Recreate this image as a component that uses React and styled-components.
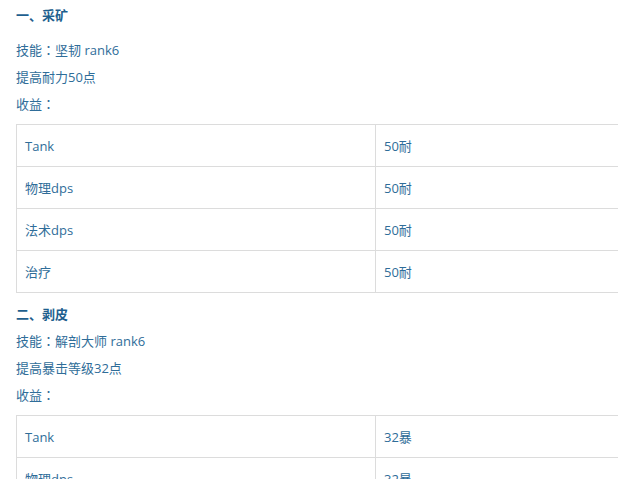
import React from "react";
import styled, { createGlobalStyle } from "styled-components";

const Global = createGlobalStyle`
  body {
    margin: 0;
    background: #fff;
    font-family: "Segoe UI", "Open Sans", "Noto Sans CJK SC", sans-serif;
  }
`;

const Page = styled.div`
  width: 642px;
  height: 479px;
  overflow: hidden;
  padding: 2px 0 0 16px;
  box-sizing: border-box;
`;

const Section = styled.section`
  display: flex;
  flex-direction: column;
`;

const Heading = styled.h3`
  margin: ${(p) => (p.first ? "0 0 8px" : "8px 0 0")};
  font-size: 13px;
  line-height: 27px;
  font-weight: bold;
  color: #1e5f8e;
`;

const Line = styled.p`
  margin: 0;
  height: 27px;
  font-size: 13px;
  line-height: 27px;
  color: #2f6d99;
`;

// 冒号居中显示
const Colon = styled.span`
  font-family: "Noto Sans CJK TC", sans-serif;
  line-height: 0;
`;

const Table = styled.table`
  margin-top: ${(p) => p.gap}px;
  width: 602px;
  border-collapse: collapse;
  table-layout: fixed;
`;

const Cell = styled.td`
  height: 41px;
  padding: 0 8px;
  border-top: 1px solid #dcdcdc;
  border-bottom: 1px solid #dcdcdc;
  border-left: 1px solid #dcdcdc;
  font-size: 13px;
  color: #2f6d99;
  vertical-align: middle;
  width: ${(p) => (p.wide ? "342px" : "auto")};
`;

const sections = [
  {
    title: "一、采矿",
    lines: [["技能", "坚韧 rank6"], ["提高耐力50点"], ["收益", ""]],
    value: "50耐",
    gap: 6,
  },
  {
    title: "二、剥皮",
    lines: [["技能", "解剖大师 rank6"], ["提高暴击等级32点"], ["收益", ""]],
    value: "32暴",
    gap: 6,
  },
];

const roles = ["Tank", "物理dps", "法术dps", "治疗"];

export default function App() {
  return (
    <>
      <Global />
      <Page>
        {sections.map((s, i) => (
          <Section key={s.title}>
            <Heading first={i === 0}>{s.title}</Heading>
            {s.lines.map((l) => (
              <Line key={l[0]}>
                {l[0]}
                {l.length > 1 && <Colon>：</Colon>}
                {l[1]}
              </Line>
            ))}
            <Table gap={s.gap}>
              <tbody>
                {roles.map((r) => (
                  <tr key={r}>
                    <Cell wide>{r}</Cell>
                    <Cell>{s.value}</Cell>
                  </tr>
                ))}
              </tbody>
            </Table>
          </Section>
        ))}
      </Page>
    </>
  );
}
